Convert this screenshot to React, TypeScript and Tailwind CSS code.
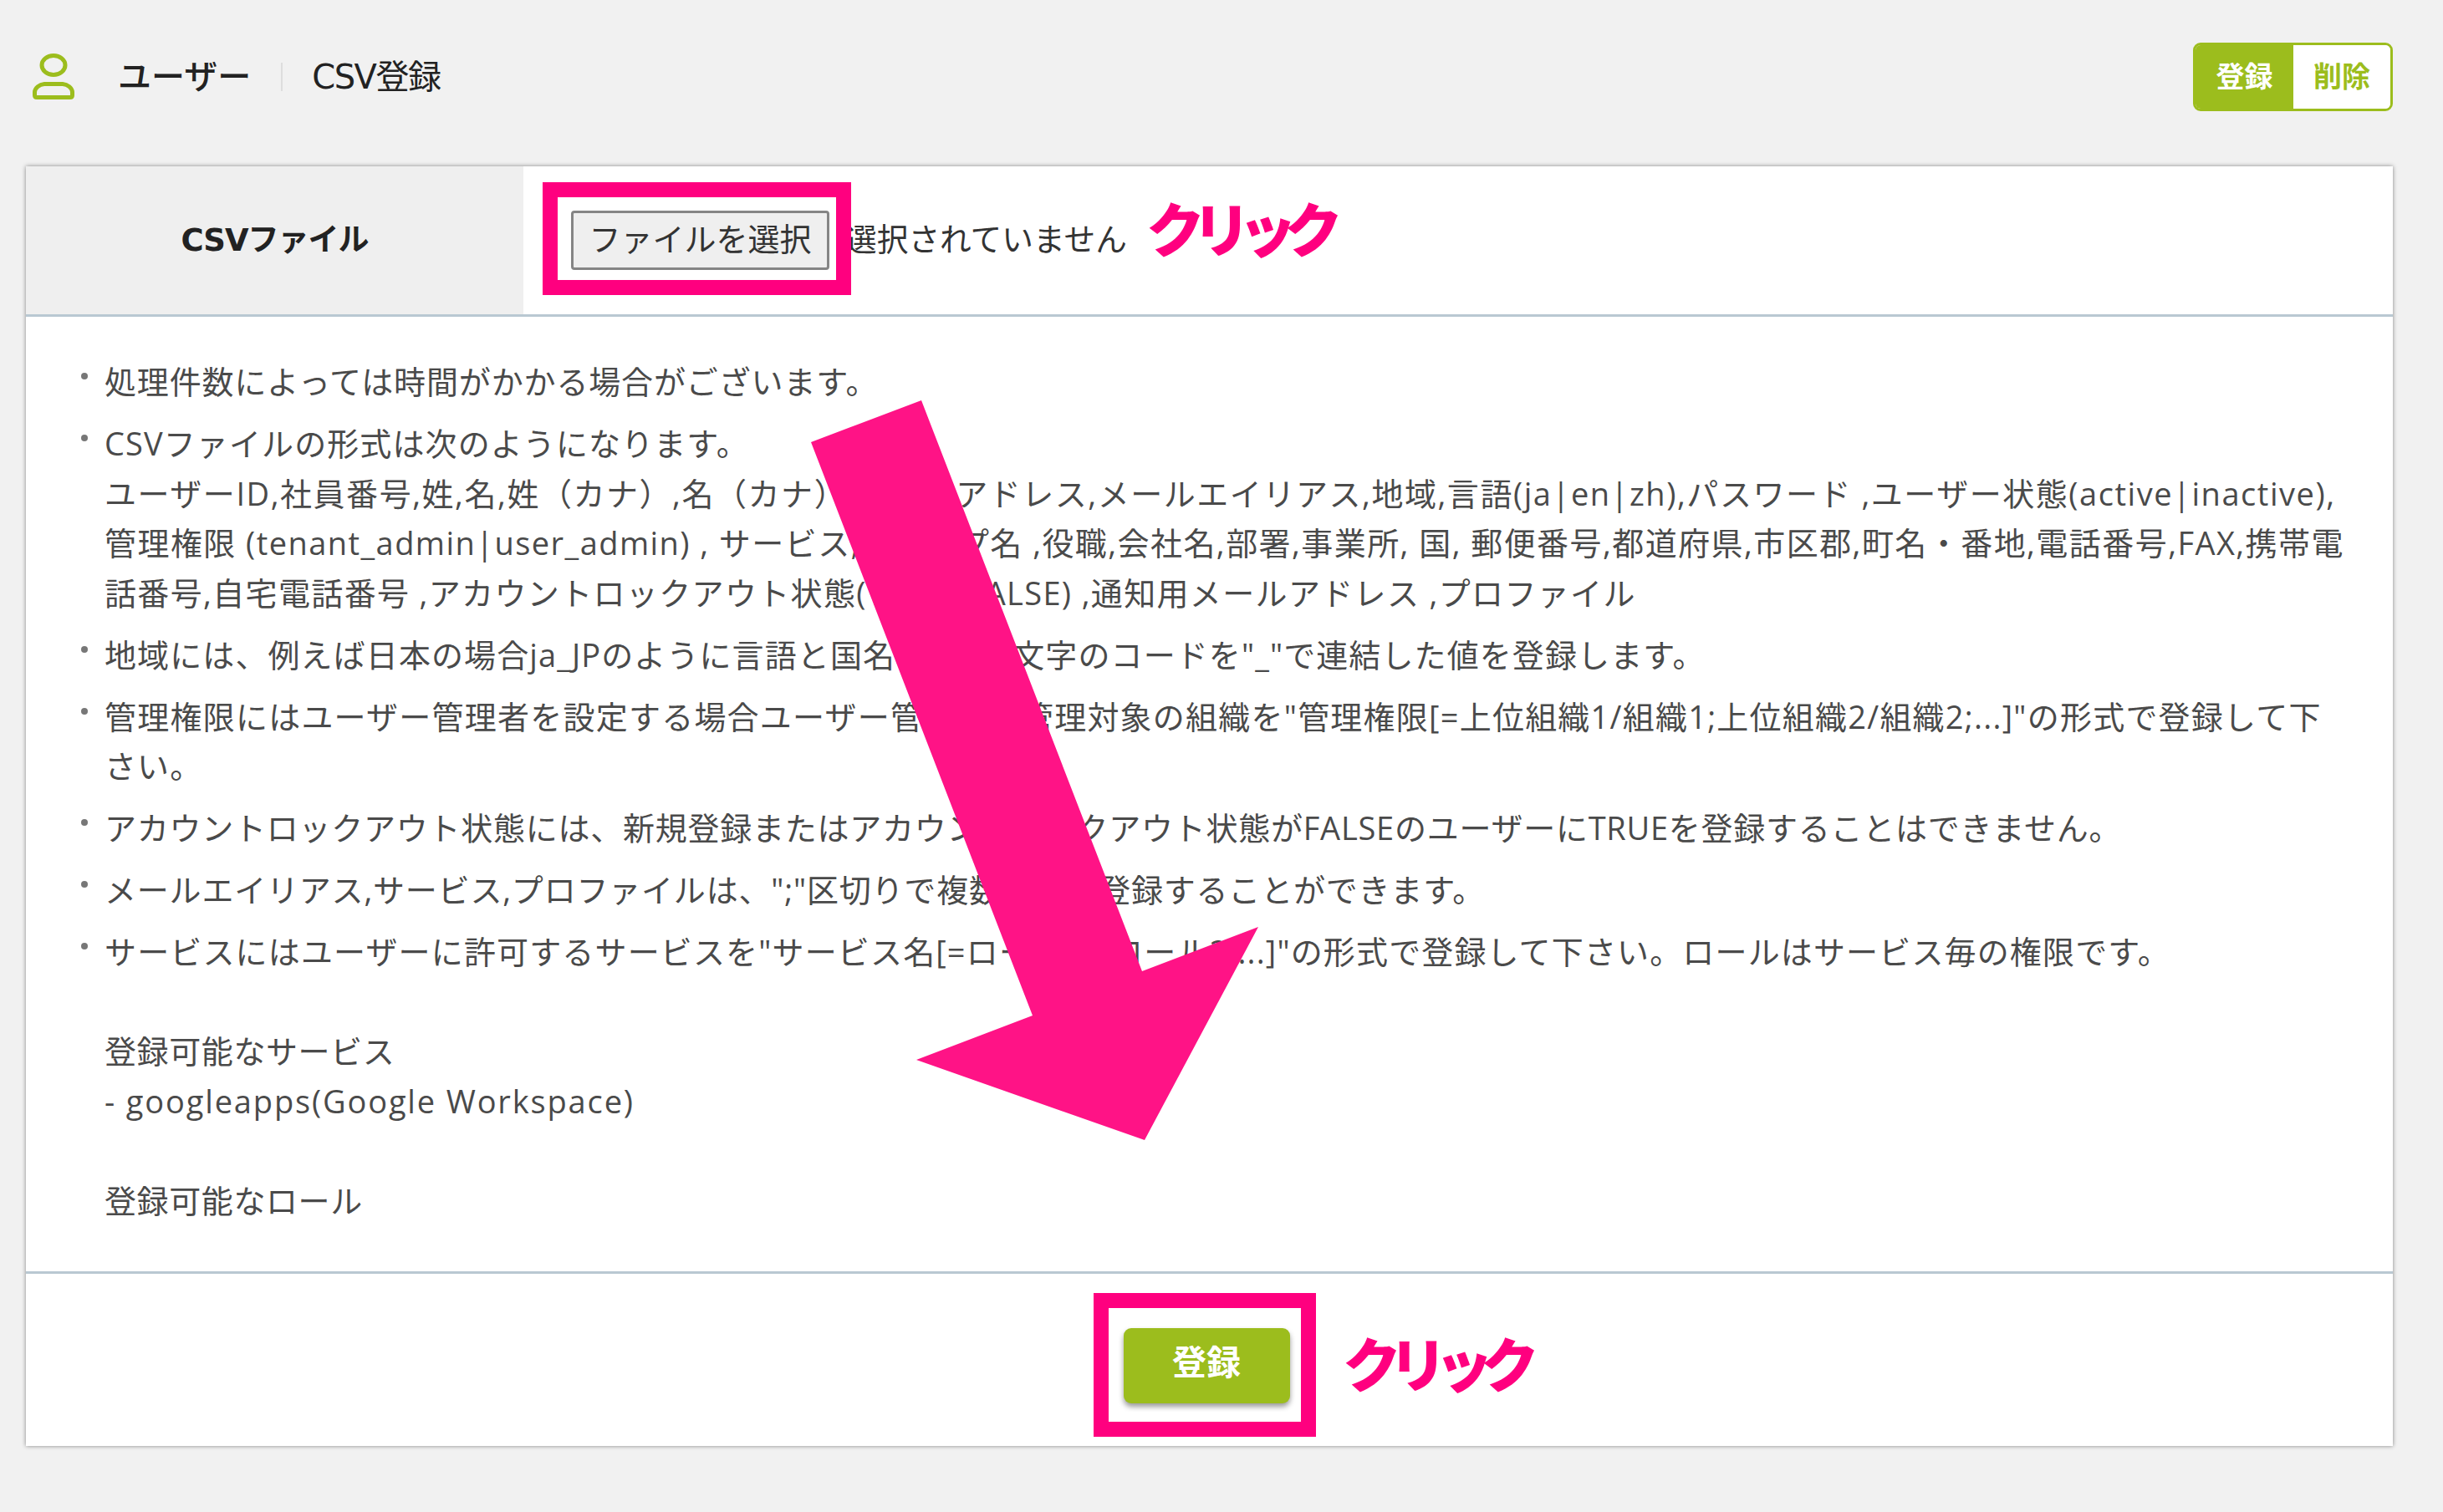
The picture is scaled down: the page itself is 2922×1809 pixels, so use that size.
import React from "react";

const font = { fontFamily: '"DejaVu Sans", "Noto Sans CJK JP", sans-serif' };

function Item({ children }: { children: React.ReactNode }) {
  return (
    <li className="relative pl-[94px] pb-[14.500px] whitespace-nowrap">
      <span className="absolute left-[66px] top-[19px] w-[8px] h-[8px] rounded-full bg-[#777777]" />
      {children}
    </li>
  );
}

export default function App() {
  return (
    <div
      className="relative w-[2922px] h-[1809px] overflow-hidden bg-[#f1f1f1] text-[#4a4a4a]"
      style={font}
    >
      <header className="flex items-center justify-between h-[199px] pl-[39px] pr-[60px] pb-[15px]">
        <div className="flex items-center">
          <svg width="50" height="56" viewBox="0 0 50 56" className="text-[#9cbd1d]">
            <ellipse cx="25" cy="14" rx="14" ry="11.500" fill="none" stroke="currentColor" strokeWidth="5" />
            <path
              d="M14 36.500 L36 36.500 C42 37 47 41 47.500 46 V50 Q47.500 52.500 45 52.500 H5 Q2.500 52.500 2.500 50 V46 C3 41 8 37 14 36.500 Z"
              fill="none"
              stroke="currentColor"
              strokeWidth="5"
              strokeLinejoin="round"
            />
          </svg>
          <h1 className="ml-[52px] text-[40px] leading-none text-[#222222] font-medium">ユーザー</h1>
          <div className="ml-[36px] mr-[35px] w-[2px] h-[34px] bg-[#dddddd]" />
          <span className="text-[40px] leading-none text-[#222222] tracking-[-1.500px]">CSV登録</span>
        </div>
        <div className="flex h-[82px] rounded-[9px] overflow-hidden border-[3px] border-[#9cbd1d] text-[34px] font-bold">
          <button className="w-[117px] bg-[#9cbd1d] text-white">登録</button>
          <button className="w-[116px] bg-white text-[#9cbd1d]">削除</button>
        </div>
      </header>

      <main className="ml-[31px] w-[2831px] h-[1531px] bg-white shadow-[0_0_5px_rgba(0,0,0,0.45)] flex flex-col text-[37.300px]">
        <div className="flex h-[180px] border-b-[3px] border-[#b9c8d2] shrink-0">
          <div className="w-[595px] bg-[#efefef] flex items-center justify-center font-bold text-[#222222] text-[37px] tracking-[-1px]">
            CSVファイル
          </div>
          <div className="flex items-center pl-[57px]">
            <button className="w-[309px] h-[71px] rounded-[4px] border-[3px] border-[#858585] bg-[#efefef] text-[#333333] text-[38px]">
              ファイルを選択
            </button>
            <span className="ml-[19px] text-[#333333] text-[37.700px]">選択されていません</span>
          </div>
        </div>

        <ul className="flex-1 pt-[48px] leading-[59.500px] text-[38px] tracking-[1.100px] font-['Open_Sans','Noto_Sans_CJK_JP',sans-serif]">
          <Item>
            <span className="tracking-[0.870px]">処理件数によっては時間がかかる場合がございます。</span>
          </Item>
          <Item>
            CSVファイルの形式は次のようになります。
            <br />
            <span className="tracking-[1.540px]">
              ユーザーID,社員番号,姓,名,姓（カナ）,名（カナ）,メールアドレス,メールエイリアス,地域,言語(ja|en|zh),パスワード ,ユーザー状態(active|inactive),
            </span>
            <br />
            <span className="tracking-[1.440px]">
              管理権限 (tenant_admin|user_admin) , サービス,グループ名 ,役職,会社名,部署,事業所, 国, 郵便番号,都道府県,市区郡,町名・番地,電話番号,FAX,携帯電
            </span>
            <br />
            <span className="tracking-[1.350px]">
              話番号,自宅電話番号 ,アカウントロックアウト状態(TRUE|FALSE) ,通知用メールアドレス ,プロファイル
            </span>
          </Item>
          <Item>地域には、例えば日本の場合ja_JPのように言語と国名を表す2文字のコードを"_"で連結した値を登録します。</Item>
          <Item>
            <span className="tracking-[1.230px]">
              管理権限にはユーザー管理者を設定する場合ユーザー管理者の管理対象の組織を"管理権限[=上位組織1/組織1;上位組織2/組織2;...]"の形式で登録して下
            </span>
            <br />
            さい。
          </Item>
          <Item>
            <span className="tracking-[0.750px]">
              アカウントロックアウト状態には、新規登録またはアカウントロックアウト状態がFALSEのユーザーにTRUEを登録することはできません。
            </span>
          </Item>
          <Item>
            <span className="tracking-[0.800px]">
              メールエイリアス,サービス,プロファイルは、";"区切りで複数の値を登録することができます。
            </span>
          </Item>
          <Item>
            <span className="tracking-[1.150px]">
              サービスにはユーザーに許可するサービスを"サービス名[=ロール1,&nbsp;&nbsp;ロール2,...]"の形式で登録して下さい。ロールはサービス毎の権限です。
            </span>
            <br />
            <br />
            <span className="tracking-[0.600px]">登録可能なサービス</span>
            <br />
            <span className="tracking-[1.850px]">- googleapps(Google Workspace)</span>
            <br />
            <br />
            <span className="tracking-[0.600px]">登録可能なロール</span>
          </Item>
        </ul>

        <footer className="h-[209px] shrink-0 border-t-[3px] border-[#b9c8d2] flex items-center justify-center">
          <button className="mr-[7px] mt-[14px] pb-[4px] w-[199px] h-[90px] rounded-[9px] bg-[#9cbd1d] text-white font-bold text-[41px] shadow-[0_4px_6px_rgba(0,0,0,0.4)]">
            登録
          </button>
        </footer>
      </main>

      {/* annotations drawn over the screenshot */}
      <div className="absolute left-[649px] top-[218px] w-[369px] h-[135px] border-[18px] border-[#ff007f]" />
      <div className="absolute left-[1308px] top-[1547px] w-[266px] h-[172px] border-[18px] border-[#ff007f]" />
      <span className="absolute left-[1371px] top-[238px] text-[70px] leading-[80px] font-black text-[#ff007f] tracking-[-15px]">
        クリック
      </span>
      <span className="absolute left-[1606px] top-[1596px] text-[70px] leading-[80px] font-black text-[#ff007f] tracking-[-15px]">
        クリック
      </span>
      <svg className="absolute left-0 top-0 pointer-events-none" width="2922" height="1809">
        <polygon
          points="970,529 1102,479 1366,1162 1505,1109 1369,1364 1096,1268 1235,1215"
          fill="#ff1386"
        />
      </svg>
    </div>
  );
}
